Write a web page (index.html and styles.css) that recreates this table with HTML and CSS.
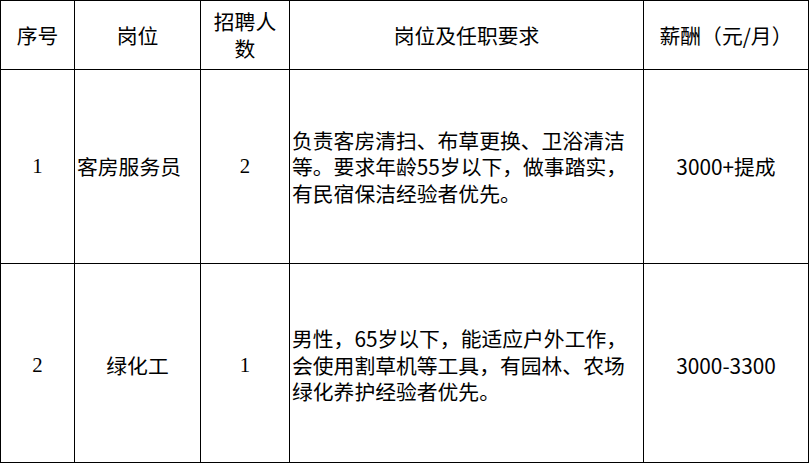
FILE: index.html
```html
<!DOCTYPE html>
<html lang="zh-CN">
<head>
<meta charset="utf-8">
<title>招聘岗位</title>
<link rel="stylesheet" href="styles.css">
</head>
<body>
<div class="grid">
  <div class="cell head">序号</div>
  <div class="cell head">岗位</div>
  <div class="cell head">招聘人<br>数</div>
  <div class="cell head">岗位及任职要求</div>
  <div class="cell head">薪酬（元/月）</div>

  <div class="cell num">1</div>
  <div class="cell left">客房服务员</div>
  <div class="cell num">2</div>
  <div class="cell desc">负责客房清扫、布草更换、卫浴清洁<br>等。要求年龄55岁以下，做事踏实，<br>有民宿保洁经验者优先。</div>
  <div class="cell">3000+提成</div>

  <div class="cell num r2">2</div>
  <div class="cell r2">绿化工</div>
  <div class="cell num r2">1</div>
  <div class="cell desc r2">男性，65岁以下，能适应户外工作，<br>会使用割草机等工具，有园林、农场<br>绿化养护经验者优先。</div>
  <div class="cell r2">3000-3300</div>
</div>
</body>
</html>
```
FILE: styles.css
```css
html, body {
  margin: 0;
  padding: 0;
  background: #fff;
}

.grid {
  display: grid;
  grid-template-columns: 73px 125px 88px 353px 164px;
  grid-template-rows: 68px 193px 198px;
  gap: 1px;
  padding: 1px;
  background: #000;
  width: max-content;
  font-family: "Noto Sans CJK SC", "Liberation Sans", sans-serif;
  font-size: 20.8px;
  line-height: 26.6px;
  color: #000;
}

.cell {
  background: #fff;
  display: flex;
  align-items: center;
  justify-content: center;
  text-align: center;
  white-space: nowrap;
}

.num {
  font-family: "Liberation Serif", "Noto Sans CJK SC", serif;
}

.left {
  justify-content: flex-start;
  padding-left: 2px;
}

.desc {
  justify-content: flex-start;
  text-align: left;
  padding-left: 2px;
}

.r2 {
  padding-top: 4px;
}
```
